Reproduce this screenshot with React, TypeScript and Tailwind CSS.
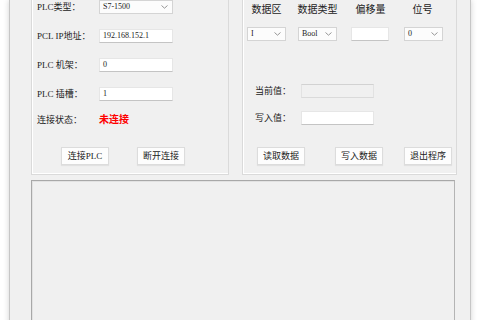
import React from 'react';

const font = "font-['Liberation_Serif','Noto_Sans_CJK_SC',serif]";

const Chevron = () => (
  <svg width="7" height="4" viewBox="0 0 7 4" className="shrink-0">
    <path d="M0.5 0.5 L3.5 3.2 L6.5 0.5" fill="none" stroke="#8a8a8a" strokeWidth="0.9" />
  </svg>
);

const Combo = ({ value, w }: { value: string; w: string }) => (
  <div className={`${w} h-[14px] flex items-center justify-between bg-[#fcfcfc] border border-[#d4d4d4] pl-[3px] pr-[4px] text-[8px] leading-none text-[#222]`}>
    <span>{value}</span>
    <Chevron />
  </div>
);

const TextBox = ({ value, w, readOnly }: { value?: string; w: string; readOnly?: boolean }) => (
  <div
    className={`${w} h-[14px] flex items-center pl-[3px] text-[8px] leading-none text-[#222] border ${
      readOnly
        ? 'bg-[#f0f0f0] border-[#e2e2e2] border-t-[#d2d2d2] border-b-[#dadada]'
        : 'bg-white border-[#e6e6e6] border-b-[#c4c4c4]'
    }`}
  >
    {value}
  </div>
);

const Btn = ({ label }: { label: string }) => (
  <div className="w-[48px] h-[18px] flex items-center justify-center bg-[#fdfdfd] border border-[#dcdcdc] shadow-[0_1px_1px_rgba(0,0,0,0.06)] text-[9px] leading-none text-[#222] whitespace-nowrap">
    {label}
  </div>
);

const Row = ({ label, children, top }: { label: string; children: React.ReactNode; top: string }) => (
  <div className={`flex items-center h-[14px] ${top}`}>
    <span className="w-[62px] text-[9px] leading-none text-[#222] whitespace-nowrap">{label}</span>
    {children}
  </div>
);

export default function App() {
  return (
    <div className={`w-[480px] h-[320px] overflow-hidden bg-white ${font}`}>
      <div className="ml-[9px] w-[462px] h-[330px] bg-[#f0f0f0] border-x border-[#c6c6c6] shadow-[0_0_6px_rgba(0,0,0,0.18)] pl-[21px] pr-[13px]">
        <div className="flex gap-[13px] h-[175px]">
          {/* left panel */}
          <div className="w-[198px] h-full border border-t-0 border-[#dadada] shadow-[inset_1px_0_0_#fff,inset_0_-1px_0_#fff] pl-[5px]">
            <Row label="PLC类型：" top="mt-0">
              <Combo value="S7-1500" w="w-[74px]" />
            </Row>
            <Row label="PCL IP地址：" top="mt-[15px]">
              <TextBox value="192.168.152.1" w="w-[74px]" />
            </Row>
            <Row label="PLC 机架：" top="mt-[15px]">
              <TextBox value="0" w="w-[74px]" />
            </Row>
            <Row label="PLC 插槽：" top="mt-[15px]">
              <TextBox value="1" w="w-[74px]" />
            </Row>
            <Row label="连接状态：" top="mt-[12px]">
              <span className="text-[10px] leading-none font-bold text-[#ff0000]">未连接</span>
            </Row>
            <div className="flex gap-[28px] pl-[24px] mt-[20px]">
              <Btn label="连接PLC" />
              <Btn label="断开连接" />
            </div>
          </div>

          {/* right panel */}
          <div className="w-[215px] h-full border border-t-0 border-[#dadada] shadow-[inset_1px_0_0_#fff,inset_0_-1px_0_#fff] pl-[4px]">
            <div className="flex h-[20px] items-center text-[10px] leading-none text-[#222] whitespace-nowrap">
              <span className="w-[39px] flex justify-center">数据区</span>
              <span className="w-[39px] ml-[12px] flex justify-center">数据类型</span>
              <span className="w-[39px] ml-[14px] flex justify-center">偏移量</span>
              <span className="w-[39px] ml-[13px] flex justify-center">位号</span>
            </div>
            <div className="flex mt-[7px]">
              <Combo value="I" w="w-[39px]" />
              <div className="ml-[12px]">
                <Combo value="Bool" w="w-[39px]" />
              </div>
              <div className="ml-[14px]">
                <TextBox w="w-[38px]" />
              </div>
              <div className="ml-[15px]">
                <Combo value="0" w="w-[39px]" />
              </div>
            </div>
            <div className="flex items-center mt-[44px] pl-[8px] h-[12px]">
              <span className="w-[46px] text-[9px] leading-none text-[#222]">当前值：</span>
              <TextBox w="w-[73px]" readOnly />
            </div>
            <div className="flex items-center mt-[14px] pl-[8px] h-[14px]">
              <span className="w-[46px] text-[9px] leading-none text-[#222]">写入值：</span>
              <TextBox w="w-[73px]" />
            </div>
            <div className="flex mt-[22px] pl-[10px]">
              <Btn label="读取数据" />
              <div className="ml-[30px]">
                <Btn label="写入数据" />
              </div>
              <div className="ml-[21px]">
                <Btn label="退出程序" />
              </div>
            </div>
          </div>
        </div>

        {/* log box */}
        <div className="mt-[5px] w-[424px] h-[150px] bg-[#f0f0f0] border border-[#b4b4b4] border-t-[#a8a8a8] border-l-[#a8a8a8] shadow-[inset_1px_1px_0_#e2e2e2]" />
      </div>
    </div>
  );
}
